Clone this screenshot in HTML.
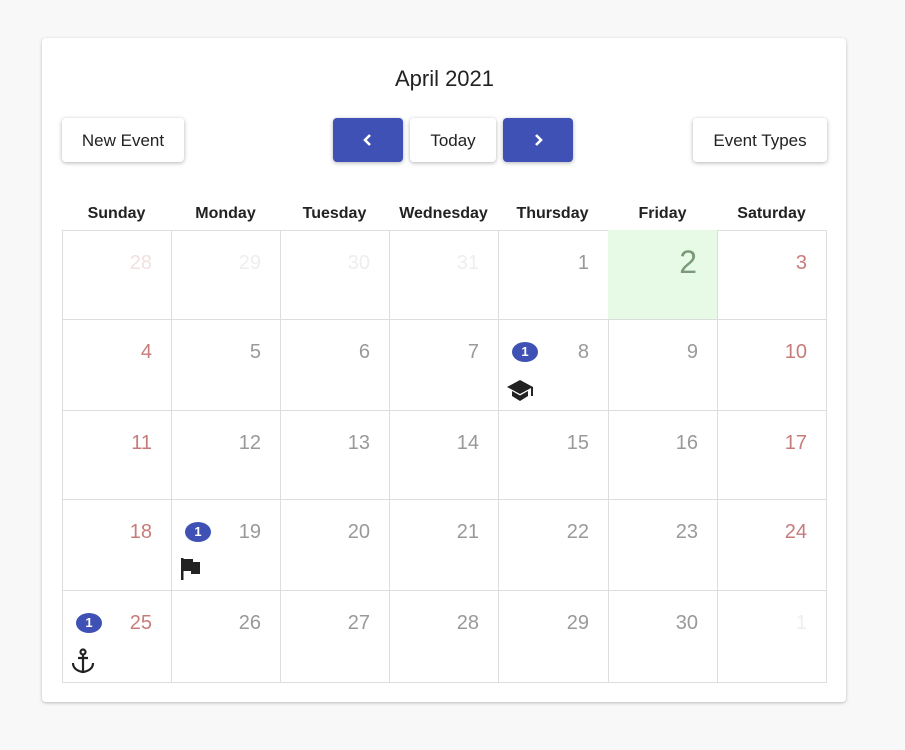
<!DOCTYPE html>
<html><head><style>
body{margin:0;width:905px;height:750px;background:#f8f8f8;font-family:"Liberation Sans",sans-serif;position:relative;overflow:hidden}
.card{position:absolute;left:42px;top:38px;width:804px;height:664px;background:#fff;border-radius:4px;box-shadow:0 1px 3px rgba(0,0,0,.25)}
.title{position:absolute;left:0;width:889px;top:66px;text-align:center;font-size:22px;color:#222}
.btn{position:absolute;top:118px;height:44px;border-radius:4px;background:#fff;box-shadow:0 1px 4px rgba(0,0,0,.3);font-size:17px;color:#222;text-align:center;line-height:45px}
.blue{background:#3f51b5;color:#fff}
.dh{position:absolute;top:205px;width:109px;text-align:center;font-weight:bold;font-size:16px;color:#222}
.cell{position:absolute;border-right:1px solid #ddd;border-bottom:1px solid #ddd;box-sizing:border-box}
.n{position:absolute;right:19px;top:22px;font-size:20px;color:#999;font-weight:300}
.we{color:#c77c7c}.out{color:#eee}.outw{color:#f3e0e0}
.badge{position:absolute;left:14px;top:23px;width:26px;height:20px;border-radius:50%;background:#3f51b5;color:#fff;font-weight:bold;font-size:13px;text-align:center;line-height:20px}
.ic{position:absolute;left:8px;top:58px}
</style></head><body>
<div class="card"></div>
<div class="title">April 2021</div>
<div class="btn" style="left:62px;width:122px">New Event</div>
<div class="btn blue" style="left:333px;width:70px"><svg width="14" height="16" viewBox="0 0 14 16" style="margin-top:14px"><path d="M9 3L4 8l5 5" stroke="#fff" stroke-width="2.6" fill="none"/></svg></div>
<div class="btn" style="left:410px;width:86px">Today</div>
<div class="btn blue" style="left:503px;width:70px"><svg width="14" height="16" viewBox="0 0 14 16" style="margin-top:14px"><path d="M5 3l5 5-5 5" stroke="#fff" stroke-width="2.6" fill="none"/></svg></div>
<div class="btn" style="left:693px;width:134px">Event Types</div>
<div id="g"></div>
<script>
var xs=[62,171,280,389,498,608,717,826],ys=[230,319,410,499,590,682];
var days=["Sunday","Monday","Tuesday","Wednesday","Thursday","Friday","Saturday"];
var h="";
for(var i=0;i<7;i++)h+='<div class="dh" style="left:'+xs[i]+'px">'+days[i]+'</div>';
h+='<div style="position:absolute;left:62px;top:230px;width:765px;height:1px;background:#ddd"></div><div style="position:absolute;left:62px;top:230px;width:1px;height:452px;background:#ddd"></div>';
var nums=[28,29,30,31,1,2,3];
var grad='<svg width="28" height="24" viewBox="0 0 28 24"><path d="M14 1L1 8l13 7 11-6v8h2V8z" fill="#222"/><path d="M6 12v5l8 5 8-5v-5l-8 4.5z" fill="#222"/></svg>';
var flag='<svg width="22" height="24" viewBox="0 0 22 24"><rect x="1" y="1" width="2.5" height="22" fill="#222"/><path d="M3 2h10v3h7v12h-9v-3H3z" fill="#222"/></svg>';
var anchor='<svg width="26" height="26" viewBox="0 0 26 26"><circle cx="13" cy="4" r="2.5" fill="none" stroke="#222" stroke-width="2.2"/><path d="M13 6v18M8 10h10M3 15c0 5 4 8 10 9 6-1 10-4 10-9" fill="none" stroke="#222" stroke-width="2.2"/></svg>';
for(var r=0;r<5;r++)for(var c=0;c<7;c++){
 var idx=r*7+c,d=idx-3,cls="n",txt,st="";
 if(idx<4){txt=nums[idx];cls+=c==0?" outw":" out";}
 else if(d>30){txt=d-30;cls+=" out";}
 else{txt=d;if(c==0||c==6)cls+=" we";}
 if(idx<7)txt=nums[idx];
 var bg=(d==2)?"background:#e6fae6;":"";
 if(d==2){st="font-size:32px;top:14px;color:#7a9a7a;right:20px";}
 h+='<div class="cell" style="'+bg+'left:'+xs[c]+'px;top:'+ys[r]+'px;width:'+(xs[c+1]-xs[c]+1)+'px;height:'+(ys[r+1]-ys[r]+1)+'px">';
 if(d==8||d==19||d==25)h+='<div class="badge">1</div>';
 if(d==8)h+='<div class="ic" style="top:60px">'+grad+'</div>';
 if(d==19)h+='<div class="ic" style="top:58px;left:9px">'+flag+'</div>';
 if(d==25)h+='<div class="ic" style="top:58px">'+anchor+'</div>';
 h+='<div class="'+cls+'" style="'+st+'">'+txt+'</div></div>';
}
document.getElementById("g").innerHTML=h;
</script>
</body></html>
